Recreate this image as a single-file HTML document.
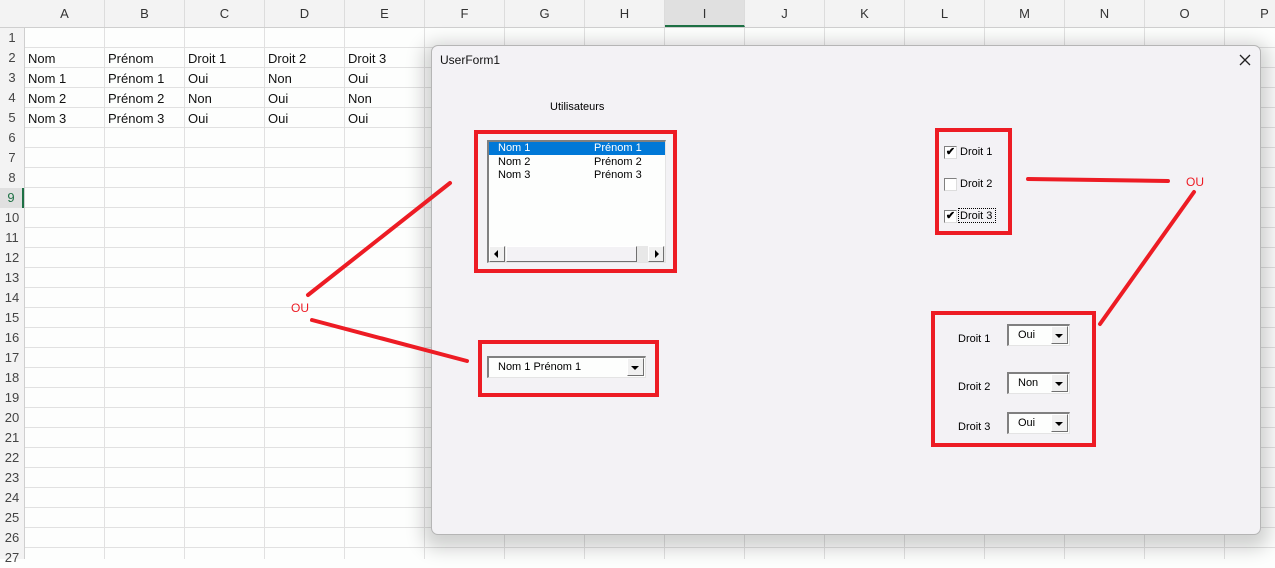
<!DOCTYPE html>
<html><head><meta charset="utf-8"><style>
*{margin:0;padding:0;box-sizing:border-box}
body{width:1275px;height:559px;overflow:hidden;position:relative;background:#fdfefd;font-family:"Liberation Sans",sans-serif}
.abs{position:absolute}
#hdr{left:0;top:0;width:1275px;height:28px;background:#f3f3f3;border-bottom:1px solid #cfcfcf}
#rh{left:0;top:28px;width:25px;height:531px;background:#f3f3f3;border-right:1px solid #cfcfcf}
#grid{left:25px;top:28px;width:1250px;height:531px;
background-image:repeating-linear-gradient(90deg,transparent 0 79px,#e1e1e1 79px 80px),repeating-linear-gradient(180deg,transparent 0 19px,#e1e1e1 19px 20px)}
.ch{position:absolute;top:0;height:27px;width:80px;text-align:center;line-height:27px;font-size:13px;color:#333;border-right:1px solid #dcdcdc}
.rn{position:absolute;left:0;width:24px;text-align:center;font-size:13px;color:#444;height:20px;line-height:20px}
.c{position:absolute;font-size:13px;color:#111;height:20px;line-height:20px}
#form{left:431px;top:45px;width:830px;height:490px;background:#f3f2f5;border:1px solid #b5b5b5;border-radius:7px;box-shadow:0 6px 18px 8px rgba(0,0,0,.18)}
.f{position:absolute;font-size:11px;color:#000;font-family:"Liberation Sans",sans-serif}
.sunk{background:#fdfefd;border-top:2px solid #808080;border-left:2px solid #808080;border-right:1px solid #e4e4e4;border-bottom:1px solid #e4e4e4}
.btn{position:absolute;background:#f0f0f0;border-top:1px solid #fff;border-left:1px solid #fff;border-right:1px solid #707070;border-bottom:1px solid #707070}
.tri{position:absolute;width:0;height:0;border-left:4px solid transparent;border-right:4px solid transparent;border-top:4px solid #000}
.cb{position:absolute;width:13px;height:13px;background:#fff;border-top:1px solid #808080;border-left:1px solid #808080;border-right:1px solid #ddd;border-bottom:1px solid #ddd;font-size:11px;line-height:11px;text-align:center;font-weight:bold}
</style></head><body>
<div id="hdr" class="abs">
<div class="ch" style="left:25px">A</div><div class="ch" style="left:105px">B</div><div class="ch" style="left:185px">C</div><div class="ch" style="left:265px">D</div><div class="ch" style="left:345px">E</div><div class="ch" style="left:425px">F</div><div class="ch" style="left:505px">G</div><div class="ch" style="left:585px">H</div><div class="ch" style="left:665px;background:#e0e0e0;border-bottom:2px solid #1e7145">I</div><div class="ch" style="left:745px">J</div><div class="ch" style="left:825px">K</div><div class="ch" style="left:905px">L</div><div class="ch" style="left:985px">M</div><div class="ch" style="left:1065px">N</div><div class="ch" style="left:1145px">O</div><div class="ch" style="left:1225px">P</div>
</div>
<div id="rh" class="abs">
<div class="rn" style="top:0">1</div><div class="rn" style="top:20px">2</div><div class="rn" style="top:40px">3</div><div class="rn" style="top:60px">4</div><div class="rn" style="top:80px">5</div><div class="rn" style="top:100px">6</div><div class="rn" style="top:120px">7</div><div class="rn" style="top:140px">8</div><div class="rn" style="top:160px;background:#e0e0e0;border-right:2px solid #1e7145;color:#1e7145">9</div><div class="rn" style="top:180px">10</div><div class="rn" style="top:200px">11</div><div class="rn" style="top:220px">12</div><div class="rn" style="top:240px">13</div><div class="rn" style="top:260px">14</div><div class="rn" style="top:280px">15</div><div class="rn" style="top:300px">16</div><div class="rn" style="top:320px">17</div><div class="rn" style="top:340px">18</div><div class="rn" style="top:360px">19</div><div class="rn" style="top:380px">20</div><div class="rn" style="top:400px">21</div><div class="rn" style="top:420px">22</div><div class="rn" style="top:440px">23</div><div class="rn" style="top:460px">24</div><div class="rn" style="top:480px">25</div><div class="rn" style="top:500px">26</div><div class="rn" style="top:520px">27</div>
</div>
<div id="grid" class="abs"></div>
<div class="c" style="left:28px;top:49px">Nom</div><div class="c" style="left:108px;top:49px">Prénom</div><div class="c" style="left:188px;top:49px">Droit 1</div><div class="c" style="left:268px;top:49px">Droit 2</div><div class="c" style="left:348px;top:49px">Droit 3</div>
<div class="c" style="left:28px;top:69px">Nom 1</div><div class="c" style="left:108px;top:69px">Prénom 1</div><div class="c" style="left:188px;top:69px">Oui</div><div class="c" style="left:268px;top:69px">Non</div><div class="c" style="left:348px;top:69px">Oui</div>
<div class="c" style="left:28px;top:89px">Nom 2</div><div class="c" style="left:108px;top:89px">Prénom 2</div><div class="c" style="left:188px;top:89px">Non</div><div class="c" style="left:268px;top:89px">Oui</div><div class="c" style="left:348px;top:89px">Non</div>
<div class="c" style="left:28px;top:109px">Nom 3</div><div class="c" style="left:108px;top:109px">Prénom 3</div><div class="c" style="left:188px;top:109px">Oui</div><div class="c" style="left:268px;top:109px">Oui</div><div class="c" style="left:348px;top:109px">Oui</div>

<div id="form" class="abs"></div>
<div class="f" style="left:440px;top:53px;font-size:12px;color:#111">UserForm1</div>
<svg class="abs" style="left:1239px;top:54px" width="12" height="12"><path d="M1 1L11 11M11 1L1 11" stroke="#222" stroke-width="1.3"/></svg>
<div class="f" style="left:550px;top:101px">Utilisateurs</div>

<div class="abs sunk" style="left:487px;top:140px;width:179px;height:123px"></div>
<div class="abs" style="left:489px;top:142px;width:176px;height:13px;background:#0078d7"></div>
<div class="f" style="left:498px;top:142px;color:#fff">Nom 1</div><div class="f" style="left:594px;top:142px;color:#fff">Prénom 1</div>
<div class="f" style="left:498px;top:156px">Nom 2</div><div class="f" style="left:594px;top:156px">Prénom 2</div>
<div class="f" style="left:498px;top:169px">Nom 3</div><div class="f" style="left:594px;top:169px">Prénom 3</div>
<div class="abs" style="left:489px;top:246px;width:176px;height:16px;background:#e8e8e8"></div>
<div class="btn" style="left:489px;top:246px;width:16px;height:16px"></div>
<div class="abs" style="left:494px;top:250px;width:0;height:0;border-top:4px solid transparent;border-bottom:4px solid transparent;border-right:4px solid #000"></div>
<div class="btn" style="left:506px;top:246px;width:131px;height:16px;background:#f3f2f5"></div>
<div class="btn" style="left:648px;top:246px;width:16px;height:16px"></div>
<div class="abs" style="left:655px;top:250px;width:0;height:0;border-top:4px solid transparent;border-bottom:4px solid transparent;border-left:4px solid #000"></div>

<div class="abs sunk" style="left:487px;top:356px;width:159px;height:22px"></div>
<div class="f" style="left:498px;top:361px">Nom 1 Prénom 1</div>
<div class="btn" style="left:627px;top:358px;width:17px;height:18px"></div><div class="tri" style="left:631px;top:366px"></div>

<div class="cb" style="left:944px;top:146px">✔</div><div class="f" style="left:960px;top:146px">Droit 1</div>
<div class="cb" style="left:944px;top:178px"></div><div class="f" style="left:960px;top:178px">Droit 2</div>
<div class="cb" style="left:944px;top:210px">✔</div><div class="f" style="left:960px;top:210px">Droit 3</div>
<div class="abs" style="left:958px;top:208px;width:38px;height:15px;border:1px dotted #000"></div>

<div class="f" style="left:958px;top:333px">Droit 1</div>
<div class="abs sunk" style="left:1007px;top:324px;width:63px;height:22px"></div><div class="f" style="left:1018px;top:329px">Oui</div>
<div class="btn" style="left:1051px;top:326px;width:17px;height:18px"></div><div class="tri" style="left:1055px;top:334px"></div>
<div class="f" style="left:958px;top:381px">Droit 2</div>
<div class="abs sunk" style="left:1007px;top:372px;width:63px;height:22px"></div><div class="f" style="left:1018px;top:377px">Non</div>
<div class="btn" style="left:1051px;top:374px;width:17px;height:18px"></div><div class="tri" style="left:1055px;top:382px"></div>
<div class="f" style="left:958px;top:421px">Droit 3</div>
<div class="abs sunk" style="left:1007px;top:412px;width:63px;height:22px"></div><div class="f" style="left:1018px;top:417px">Oui</div>
<div class="btn" style="left:1051px;top:414px;width:17px;height:18px"></div><div class="tri" style="left:1055px;top:422px"></div>

<svg class="abs" style="left:0;top:0" width="1275" height="559">
<g fill="none" stroke="#ed1c24" stroke-width="4">
<rect x="476" y="132" width="199" height="139"/>
<rect x="480" y="342" width="177" height="53"/>
<rect x="937" y="130" width="73" height="103"/>
<rect x="933" y="313" width="161" height="132"/>
</g>
<g stroke="#ed1c24" stroke-width="4" stroke-linecap="round">
<line x1="450" y1="183" x2="308" y2="295"/>
<line x1="312" y1="320" x2="467" y2="361"/>
<line x1="1028" y1="179" x2="1168" y2="181"/>
<line x1="1194" y1="192" x2="1100" y2="324"/>
</g>
<text x="291" y="312" fill="#ed1c24" font-size="12" font-family="Liberation Sans, sans-serif">OU</text>
<text x="1186" y="186" fill="#ed1c24" font-size="12" font-family="Liberation Sans, sans-serif">OU</text>
</svg>
</body></html>
